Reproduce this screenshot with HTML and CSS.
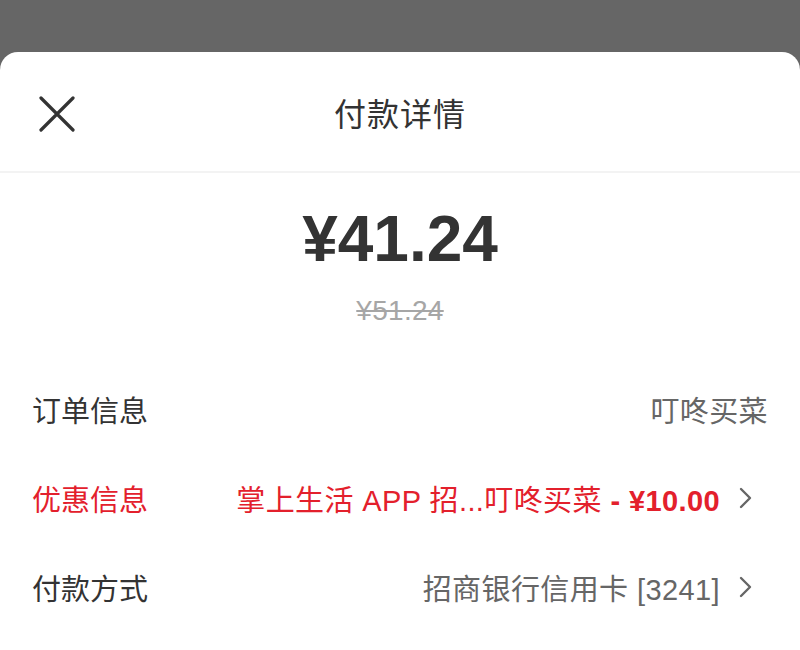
FILE: index.html
```html
<html lang="zh">
<head>
  <meta charset="UTF-8" />
  <meta name="viewport" content="width=device-width, initial-scale=1.0"/>
  <title>付款详情</title>
  <link rel="stylesheet" href="styles.css">
</head>
<body>
  <div id="mask"></div>
  <div id="sheet">
    <div class="header">
      <div class="close">
        <svg width="36" height="36" viewBox="0 0 36 36">
          <path d="M2 2 L34 34 M34 2 L2 34" stroke="#333" stroke-width="3.2" stroke-linecap="round" fill="none"/>
        </svg>
      </div>
      <h3 class="title">付款详情</h3>
    </div>
    <div class="amount">
      <p class="price">¥41.24</p>
      <p class="origin">¥51.24</p>
    </div>
    <div class="list">
      <div class="row">
        <span class="label">订单信息</span>
        <span class="value">叮咚买菜</span>
      </div>
      <div class="row red">
        <span class="label">优惠信息</span>
        <span class="value">掌上生活 APP 招...叮咚买菜 <b>- ¥10.00</b></span>
        <svg class="arrow" width="16" height="24" viewBox="0 0 16 24">
          <path d="M3 3 L12 12 L3 21" stroke="#666" stroke-width="2.4" stroke-linecap="round" stroke-linejoin="round" fill="none"/>
        </svg>
      </div>
      <div class="row">
        <span class="label">付款方式</span>
        <span class="value">招商银行信用卡 [3241]</span>
        <svg class="arrow" width="16" height="24" viewBox="0 0 16 24">
          <path d="M3 3 L12 12 L3 21" stroke="#666" stroke-width="2.4" stroke-linecap="round" stroke-linejoin="round" fill="none"/>
        </svg>
      </div>
    </div>
  </div>
</body>
</html>
```

FILE: styles.css
```css
* {
  box-sizing: border-box;
  font-family: 'Liberation Sans', 'Noto Sans CJK SC', sans-serif;
  margin: 0;
  padding: 0;
}

body {
  background-color: #666666;
  height: 650px;
  overflow: hidden;
  display: flex;
  flex-direction: column;
}

#mask {
  height: 52px;
  flex: none;
}

#sheet {
  flex: 1;
  background-color: white;
  border-radius: 18px 18px 0 0;
}

.header {
  height: 121px;
  display: flex;
  align-items: center;
  justify-content: center;
  position: relative;
  border-bottom: 2px solid #f3f3f3;
}

.close {
  position: absolute;
  left: 39px;
  top: 44px;
  width: 36px;
  height: 36px;
}

.title {
  font-size: 32px;
  font-weight: 400;
  color: #333;
  letter-spacing: 1px;
}

.amount {
  height: 191px;
  display: flex;
  flex-direction: column;
  align-items: center;
  padding-top: 31px;
}

.price {
  font-size: 64px;
  font-weight: 700;
  color: #333;
  line-height: 70px;
}

.origin {
  margin-top: 20px;
  font-size: 28px;
  color: #a6a6a6;
  text-decoration: line-through;
  line-height: 34px;
  letter-spacing: 0.3px;
}

.list {
  padding: 0 32px;
}

.row {
  height: 89px;
  display: flex;
  align-items: center;
}

.label {
  font-size: 29px;
  color: #333;
  flex: 1;
}

.value {
  font-size: 29px;
  color: #666;
  letter-spacing: 0.4px;
}

.row.red .label,
.row.red .value {
  color: #e3202c;
}

.row.red b {
  font-weight: 700;
}

.arrow {
  margin-left: 18px;
  margin-right: 14px;
}
```
